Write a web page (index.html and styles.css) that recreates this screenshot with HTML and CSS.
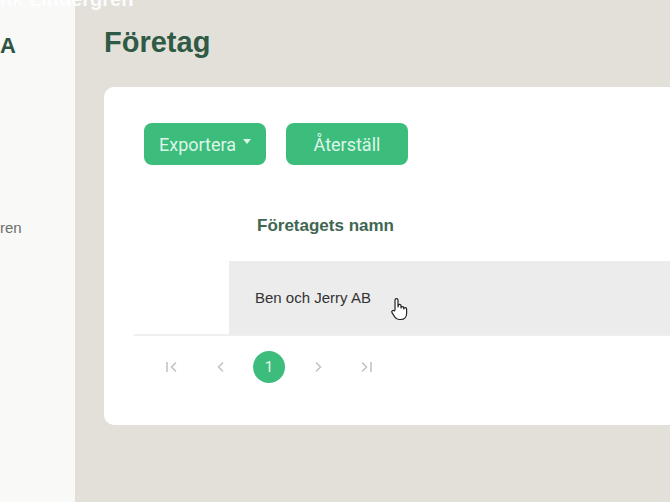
FILE: index.html
```html
<!DOCTYPE html>
<html lang="sv">
<head>
  <meta charset="UTF-8" />
  <title>Företag</title>
  <meta name="viewport" content="width=device-width, initial-scale=1.0">
  <link rel="stylesheet" href="styles.css">
</head>
<body>
  <div class="caption">nk Lindergren</div>

  <aside class="sidebar">
    <div class="brand">A</div>
    <div class="user">ren</div>
  </aside>

  <main class="main">
    <h1>Företag</h1>

    <section class="card">
      <div class="actions">
        <button class="btn">Exportera <span class="caret"></span></button>
        <button class="btn">Återställ</button>
      </div>

      <div class="table">
        <div class="head">
          <div class="spacer"></div>
          <div class="cell th">Företagets namn</div>
        </div>
        <div class="row">
          <div class="spacer"></div>
          <div class="cell td">Ben och Jerry AB
            <svg class="cursor" width="20" height="24" viewBox="0 0 20 24">
              <path d="M6 13V3.2a1.5 1.5 0 0 1 3 0V10l0.2-1.4a1.4 1.4 0 0 1 2.8 0.4V11a1.4 1.4 0 0 1 2.8 0V12a1.4 1.4 0 0 1 2.8 0v4.5c0 3.5-2.3 6-5.8 6H10c-2 0-3.2-1-4.3-2.6L3 15.6a1.4 1.4 0 0 1 2.3-1.6z" fill="#fff" stroke="#222" stroke-width="1.2" stroke-linejoin="round"/>
            </svg>
          </div>
        </div>
      </div>

      <nav class="pager">
        <span class="pg">
          <svg width="14" height="12" viewBox="0 0 14 12"><path d="M2 1v10M11 1.5 6.5 6l4.5 4.5" fill="none" stroke="#c4c4c4" stroke-width="1.6"/></svg>
        </span>
        <span class="pg">
          <svg width="10" height="12" viewBox="0 0 10 12"><path d="M7 1.5 2.5 6 7 10.5" fill="none" stroke="#c4c4c4" stroke-width="1.6"/></svg>
        </span>
        <span class="pg current">1</span>
        <span class="pg">
          <svg width="10" height="12" viewBox="0 0 10 12"><path d="M3 1.5 7.5 6 3 10.5" fill="none" stroke="#c4c4c4" stroke-width="1.6"/></svg>
        </span>
        <span class="pg">
          <svg width="14" height="12" viewBox="0 0 14 12"><path d="M12 1v10M3 1.5 7.5 6 3 10.5" fill="none" stroke="#c4c4c4" stroke-width="1.6"/></svg>
        </span>
      </nav>
    </section>
  </main>
</body>
</html>
```

FILE: styles.css
```css
body {
  margin: 0;
  font-family: 'Liberation Sans', Arial, sans-serif;
  display: flex;
  height: 502px;
  overflow: hidden;
  background-color: #e3e0d9;
}

.caption {
  position: absolute;
  top: -12px;
  left: 0;
  font-size: 20px;
  font-weight: 700;
  color: #ffffff;
  opacity: 0.92;
}

.sidebar {
  width: 75px;
  flex-shrink: 0;
  background-color: #f9f9f8;
}

.brand {
  margin-top: 33px;
  font-size: 22px;
  font-weight: 700;
  color: #2c5641;
}

.user {
  margin-top: 160px;
  font-size: 15px;
  color: #6b6f6d;
}

.main {
  flex: 1;
  padding-left: 29px;
  overflow: hidden;
}

h1 {
  margin: 25px 0 0;
  font-size: 29px;
  line-height: 34px;
  font-weight: 700;
  color: #2f5a45;
}

.card {
  margin-top: 28px;
  width: 620px;
  height: 338px;
  background-color: #ffffff;
  border-radius: 10px;
  padding-top: 36px;
  box-sizing: border-box;
}

.actions {
  display: flex;
  gap: 20px;
  padding-left: 40px;
}

.btn {
  height: 42px;
  width: 122px;
  border: none;
  border-radius: 8px;
  background-color: #3dbd7c;
  color: #dff5e9;
  font-family: Roboto, 'Noto Sans', sans-serif;
  font-size: 18px;
  display: flex;
  align-items: center;
  justify-content: center;
  gap: 7px;
}

.caret {
  width: 0;
  height: 0;
  border-left: 4px solid transparent;
  border-right: 4px solid transparent;
  border-top: 5px solid #dff5e9;
  margin-bottom: 5px;
}

.table {
  margin-top: 25px;
  margin-left: 30px;
  border-bottom: 2px solid #efefef;
}

.head,
.row {
  display: flex;
}

.spacer {
  width: 95px;
  flex-shrink: 0;
}

.cell {
  flex: 1;
  padding-left: 28px;
  display: flex;
  align-items: center;
}

.th {
  height: 71px;
  font-size: 17px;
  font-weight: 700;
  color: #406652;
}

.td {
  height: 73px;
  background-color: #ececec;
  font-size: 15px;
  color: #333333;
  padding-left: 26px;
  position: relative;
}

.cursor {
  position: absolute;
  left: 160px;
  top: 36px;
}

.pager {
  display: flex;
  align-items: center;
  gap: 16.5px;
  padding-left: 52px;
  margin-top: 15px;
}

.pg {
  width: 32px;
  height: 32px;
  display: flex;
  align-items: center;
  justify-content: center;
}

.current {
  border-radius: 50%;
  background-color: #3dbd7c;
  color: #e6f7ee;
  font-family: Roboto, 'Noto Sans', sans-serif;
  font-size: 15px;
}
```
